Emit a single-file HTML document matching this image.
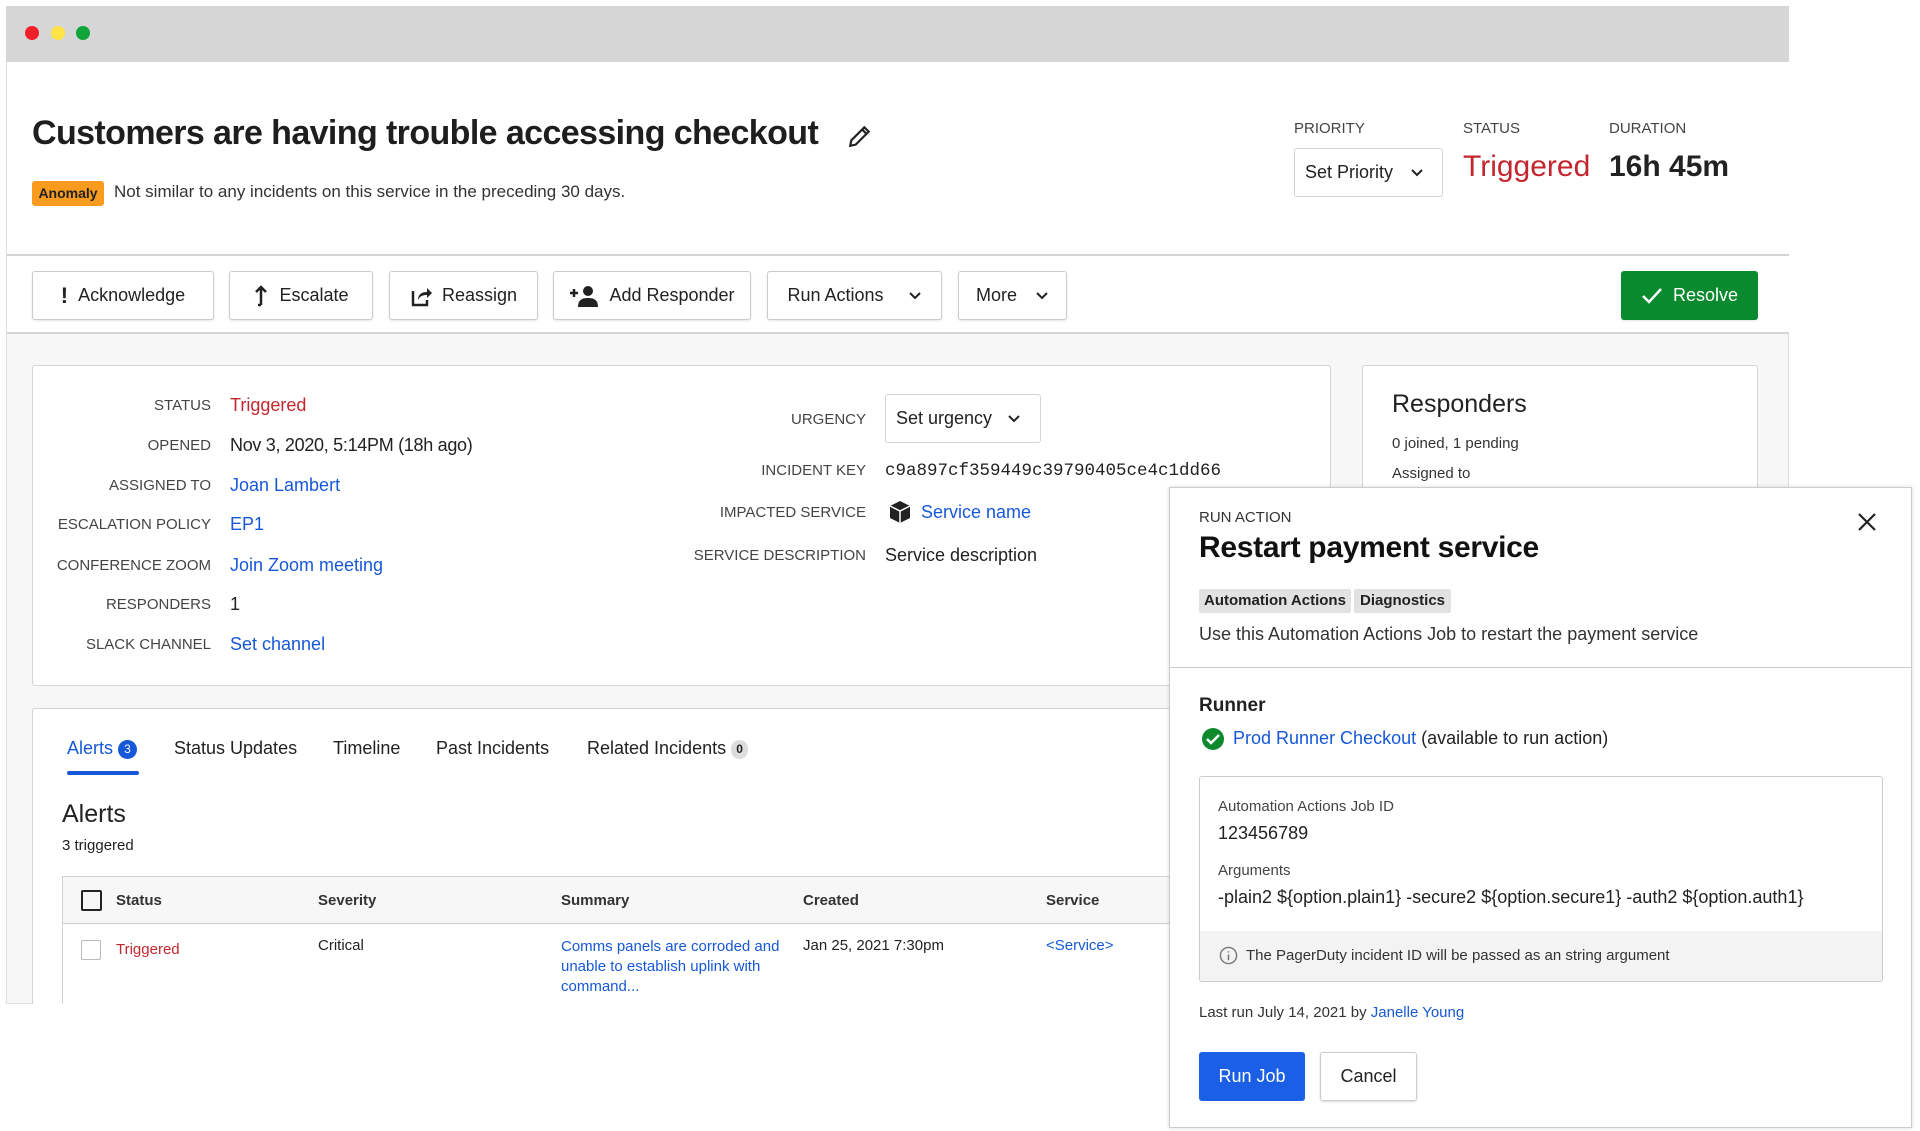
<!DOCTYPE html>
<html><head><meta charset="utf-8"><style>
*{box-sizing:border-box;margin:0;padding:0}
body{width:1920px;height:1131px;background:#fff;font-family:"Liberation Sans",sans-serif;color:#222;position:relative;overflow:hidden}
.a{position:absolute;white-space:nowrap}
.blue{color:#1658d8}.red{color:#c4262e}
.lbl{font-size:15px;color:#444;text-align:right;width:200px}
.btn{position:absolute;top:271px;height:49px;border:1px solid #ccc;border-radius:3px;background:#fff;font-size:18px;display:flex;align-items:center;justify-content:center;gap:10px;box-shadow:0 1px 2px rgba(0,0,0,.1)}
.box{position:absolute;border:1px solid #d4d4d4;border-radius:3px;background:#fff}
.th{position:absolute;top:892px;font-size:15px;font-weight:bold;color:#333}
.chev{display:inline-block;vertical-align:middle}
</style></head><body>
<div class="a" style="left:6px;top:6px;width:1783px;height:998px;border:1px solid #ddd;background:#f7f7f7"></div>
<div class="a" style="left:6px;top:6px;width:1783px;height:56px;background:#d6d6d6"></div>
<div class="a" style="left:25px;top:26px;width:14px;height:14px;border-radius:50%;background:#f0202a"></div>
<div class="a" style="left:51px;top:26px;width:14px;height:14px;border-radius:50%;background:#ffe347"></div>
<div class="a" style="left:76px;top:26px;width:14px;height:14px;border-radius:50%;background:#10a53a"></div>
<div class="a" style="left:7px;top:62px;width:1782px;height:271px;background:#fff"></div>
<div class="a" style="left:7px;top:254px;width:1782px;height:2px;background:#d4d4d4"></div>
<div class="a" style="left:7px;top:332px;width:1782px;height:2px;background:#d4d4d4"></div>

<div class="a" style="left:32px;top:114px;font-size:34px;font-weight:bold;color:#1e1e1e;letter-spacing:-0.6px">Customers are having trouble accessing checkout</div>
<svg class="a" style="left:847px;top:123px" width="26" height="26" viewBox="0 0 24 24"><path d="M3 21l1-5L16 4l4 4L8 20z M14 6l4 4" fill="none" stroke="#222" stroke-width="2"/></svg>
<div class="a" style="left:32px;top:181px;width:72px;height:25px;background:#f89b1e;border-radius:3px;font-size:14px;font-weight:bold;line-height:25px;text-align:center">Anomaly</div>
<div class="a" style="left:114px;top:182px;font-size:17px;color:#333">Not similar to any incidents on this service in the preceding 30 days.</div>

<div class="a" style="left:1294px;top:120px;font-size:15px;color:#444">PRIORITY</div>
<div class="a" style="left:1463px;top:120px;font-size:15px;color:#444">STATUS</div>
<div class="a" style="left:1609px;top:120px;font-size:15px;color:#444">DURATION</div>
<div class="box" style="left:1294px;top:148px;width:149px;height:49px;font-size:18px;padding:13px 10px">Set Priority <svg class="chev" style="margin-left:12px" width="14" height="10" viewBox="0 0 14 10"><path d="M2 2l5 5 5-5" fill="none" stroke="#222" stroke-width="2"/></svg></div>
<div class="a red" style="left:1463px;top:150px;font-size:30px">Triggered</div>
<div class="a" style="left:1609px;top:150px;font-size:30px;font-weight:bold">16h 45m</div>

<div class="btn" style="left:32px;width:182px"><b style="font-size:22px">!</b>Acknowledge</div>
<div class="btn" style="left:229px;width:144px"><svg width="16" height="22" viewBox="0 0 16 22"><path d="M8 2v18M3 7l5-5 5 5M5 20h3" fill="none" stroke="#222" stroke-width="2.5"/></svg>Escalate</div>
<div class="btn" style="left:389px;width:149px"><svg width="22" height="22" viewBox="0 0 22 22"><path d="M3 6v14h14v-5" fill="none" stroke="#222" stroke-width="2.5"/><path d="M8 15c0-6 4-8 9-8V3l5 5-5 5V10c-4 0-7 1-9 5z" fill="#222"/></svg>Reassign</div>
<div class="btn" style="left:553px;width:198px"><svg width="30" height="22" viewBox="0 0 30 22"><path d="M1 8h8M5 4v8" stroke="#222" stroke-width="2.5"/><circle cx="19" cy="6" r="5" fill="#222"/><path d="M9 22c0-7 4-9 10-9s10 2 10 9z" fill="#222"/></svg>Add Responder</div>
<div class="btn" style="left:767px;width:175px;gap:24px">Run Actions <svg class="chev" width="14" height="10" viewBox="0 0 14 10"><path d="M2 2l5 5 5-5" fill="none" stroke="#222" stroke-width="2"/></svg></div>
<div class="btn" style="left:958px;width:109px;gap:18px">More <svg class="chev" width="14" height="10" viewBox="0 0 14 10"><path d="M2 2l5 5 5-5" fill="none" stroke="#222" stroke-width="2"/></svg></div>
<div class="btn" style="left:1621px;width:137px;background:#0a8a2e;border-color:#0a8a2e;color:#fff"><svg width="22" height="18" viewBox="0 0 22 18"><path d="M2 9l6 6L20 2" fill="none" stroke="#fff" stroke-width="2.5"/></svg>Resolve</div>

<div class="box" style="left:32px;top:365px;width:1299px;height:321px"></div>
<div class="a lbl" style="left:11px;top:397px">STATUS</div><div class="a red" style="left:230px;top:395px;font-size:18px">Triggered</div>
<div class="a lbl" style="left:11px;top:437px">OPENED</div><div class="a" style="left:230px;top:435px;font-size:18px;letter-spacing:-0.3px">Nov 3, 2020, 5:14PM (18h ago)</div>
<div class="a lbl" style="left:11px;top:477px">ASSIGNED TO</div><div class="a blue" style="left:230px;top:475px;font-size:18px">Joan Lambert</div>
<div class="a lbl" style="left:11px;top:516px">ESCALATION POLICY</div><div class="a blue" style="left:230px;top:514px;font-size:18px">EP1</div>
<div class="a lbl" style="left:11px;top:557px">CONFERENCE ZOOM</div><div class="a blue" style="left:230px;top:555px;font-size:18px">Join Zoom meeting</div>
<div class="a lbl" style="left:11px;top:596px">RESPONDERS</div><div class="a" style="left:230px;top:594px;font-size:18px">1</div>
<div class="a lbl" style="left:11px;top:636px">SLACK CHANNEL</div><div class="a blue" style="left:230px;top:634px;font-size:18px">Set channel</div>

<div class="a lbl" style="left:666px;top:411px">URGENCY</div>
<div class="box" style="left:885px;top:394px;width:156px;height:49px;font-size:18px;padding:13px 10px">Set urgency <svg class="chev" style="margin-left:10px" width="14" height="10" viewBox="0 0 14 10"><path d="M2 2l5 5 5-5" fill="none" stroke="#222" stroke-width="2"/></svg></div>
<div class="a lbl" style="left:666px;top:462px">INCIDENT KEY</div><div class="a" style="left:885px;top:461px;font-size:17.5px;font-family:'Liberation Mono',monospace">c9a897cf359449c39790405ce4c1dd66</div>
<div class="a lbl" style="left:666px;top:504px">IMPACTED SERVICE</div>
<svg class="a" style="left:888px;top:500px" width="24" height="24" viewBox="0 0 24 24"><path d="M12 1l10 5v12l-10 5-10-5V6z" fill="#222"/><path d="M2 6l10 5 10-5M12 11v12" stroke="#fff" stroke-width="1.5" fill="none"/></svg>
<div class="a blue" style="left:921px;top:502px;font-size:18px">Service name</div>
<div class="a lbl" style="left:666px;top:547px">SERVICE DESCRIPTION</div><div class="a" style="left:885px;top:545px;font-size:18px">Service description</div>

<div class="box" style="left:1362px;top:365px;width:396px;height:200px"></div>
<div class="a" style="left:1392px;top:390px;font-size:25px">Responders</div>
<div class="a" style="left:1392px;top:435px;font-size:15px;color:#333">0 joined, 1 pending</div>
<div class="a" style="left:1392px;top:465px;font-size:15px;color:#333">Assigned to</div>

<div class="box" style="left:32px;top:708px;width:1200px;height:320px"></div>
<div class="a blue" style="left:67px;top:738px;font-size:18px">Alerts <span style="display:inline-block;width:19px;height:19px;border-radius:50%;background:#1658d8;color:#fff;font-size:12px;text-align:center;line-height:19px;vertical-align:1px">3</span></div>
<div class="a" style="left:67px;top:771px;width:72px;height:4px;border-radius:2px;background:#1658d8"></div>
<div class="a" style="left:174px;top:738px;font-size:18px">Status Updates</div>
<div class="a" style="left:333px;top:738px;font-size:18px">Timeline</div>
<div class="a" style="left:436px;top:738px;font-size:18px">Past Incidents</div>
<div class="a" style="left:587px;top:738px;font-size:18px">Related Incidents <span style="display:inline-block;width:17px;height:19px;border-radius:9px;background:#ddd;font-size:12px;text-align:center;line-height:19px;font-weight:bold;vertical-align:1px">0</span></div>
<div class="a" style="left:62px;top:800px;font-size:25px">Alerts</div>
<div class="a" style="left:62px;top:837px;font-size:15px">3 triggered</div>
<div class="a" style="left:62px;top:876px;width:1180px;height:128px;border:1px solid #d4d4d4;border-right:none;border-bottom:none;background:#fff"></div>
<div class="a" style="left:63px;top:877px;width:1170px;height:47px;background:#f7f7f7;border-bottom:1px solid #ccc"></div>
<div class="a" style="left:81px;top:890px;width:21px;height:21px;border:2px solid #222;border-radius:2px"></div>
<div class="th" style="left:116px">Status</div><div class="th" style="left:318px">Severity</div><div class="th" style="left:561px">Summary</div><div class="th" style="left:803px">Created</div><div class="th" style="left:1046px">Service</div>
<div class="a" style="left:81px;top:940px;width:20px;height:20px;border:1px solid #bbb;border-radius:2px"></div>
<div class="a red" style="left:116px;top:941px;font-size:15px">Triggered</div>
<div class="a" style="left:318px;top:937px;font-size:15px">Critical</div>
<div class="a blue" style="left:561px;top:937px;font-size:15px;line-height:20px;white-space:normal;width:240px">Comms panels are corroded and unable to establish uplink with command...</div>
<div class="a" style="left:803px;top:937px;font-size:15px">Jan 25, 2021 7:30pm</div>
<div class="a blue" style="left:1046px;top:937px;font-size:15px">&lt;Service&gt;</div>
<div class="a" style="left:0;top:1004px;width:1169px;height:127px;background:#fff"></div>

<div class="a" style="left:1169px;top:487px;width:743px;height:641px;background:#fff;border:1px solid #ccc;box-shadow:0 0 4px rgba(0,0,0,.15)"></div>
<div class="a" style="left:1199px;top:509px;font-size:15px;color:#333">RUN ACTION</div>
<div class="a" style="left:1199px;top:531px;font-size:30px;font-weight:bold;color:#111;letter-spacing:-0.3px">Restart payment service</div>
<svg class="a" style="left:1857px;top:512px" width="20" height="20" viewBox="0 0 20 20"><path d="M2 2l16 16M18 2L2 18" stroke="#222" stroke-width="2.2"/></svg>
<div class="a" style="left:1199px;top:589px;height:24px;padding:0 5px;background:#e2e2e2;border-radius:2px;font-size:15px;font-weight:bold;line-height:24px">Automation Actions</div>
<div class="a" style="left:1354px;top:589px;height:24px;padding:0 6px;background:#e2e2e2;border-radius:2px;font-size:15px;font-weight:bold;line-height:24px">Diagnostics</div>
<div class="a" style="left:1199px;top:624px;font-size:18px;color:#333">Use this Automation Actions Job to restart the payment service</div>
<div class="a" style="left:1170px;top:667px;width:741px;height:1px;background:#ccc"></div>
<div class="a" style="left:1199px;top:695px;font-size:19px;font-weight:bold">Runner</div>
<svg class="a" style="left:1201px;top:727px" width="24" height="24" viewBox="0 0 24 24"><circle cx="12" cy="12" r="11" fill="#0e8a2c"/><path d="M6 12l4 4 8-8" fill="none" stroke="#fff" stroke-width="2.5"/></svg>
<div class="a" style="left:1233px;top:728px;font-size:18px"><span class="blue">Prod Runner Checkout</span> (available to run action)</div>
<div class="a" style="left:1199px;top:776px;width:684px;height:206px;border:1px solid #ccc;border-radius:3px;background:#fff;overflow:hidden">
<div style="position:absolute;left:0;top:154px;width:100%;height:52px;background:#f3f3f3"></div></div>
<div class="a" style="left:1218px;top:798px;font-size:15px;color:#444">Automation Actions Job ID</div>
<div class="a" style="left:1218px;top:823px;font-size:18px">123456789</div>
<div class="a" style="left:1218px;top:862px;font-size:15px;color:#444">Arguments</div>
<div class="a" style="left:1218px;top:887px;font-size:18px">-plain2 ${option.plain1} -secure2 ${option.secure1} -auth2 ${option.auth1}</div>
<svg class="a" style="left:1219px;top:946px" width="19" height="19" viewBox="0 0 20 20"><circle cx="10" cy="10" r="8.5" fill="none" stroke="#777" stroke-width="1.5"/><path d="M10 9v6M10 5.5v1.5" stroke="#777" stroke-width="1.6"/></svg>
<div class="a" style="left:1246px;top:947px;font-size:15px;color:#333">The PagerDuty incident ID will be passed as an string argument</div>
<div class="a" style="left:1199px;top:1004px;font-size:15px;color:#333">Last run July 14, 2021 by <span class="blue">Janelle Young</span></div>
<div class="a" style="left:1199px;top:1052px;width:106px;height:49px;background:#1a5fe6;border-radius:3px;color:#fff;font-size:18px;line-height:49px;text-align:center">Run Job</div>
<div class="a" style="left:1320px;top:1052px;width:97px;height:49px;border:1px solid #ccc;border-radius:3px;font-size:18px;line-height:47px;text-align:center;box-shadow:0 1px 2px rgba(0,0,0,.15)">Cancel</div>
</body></html>
